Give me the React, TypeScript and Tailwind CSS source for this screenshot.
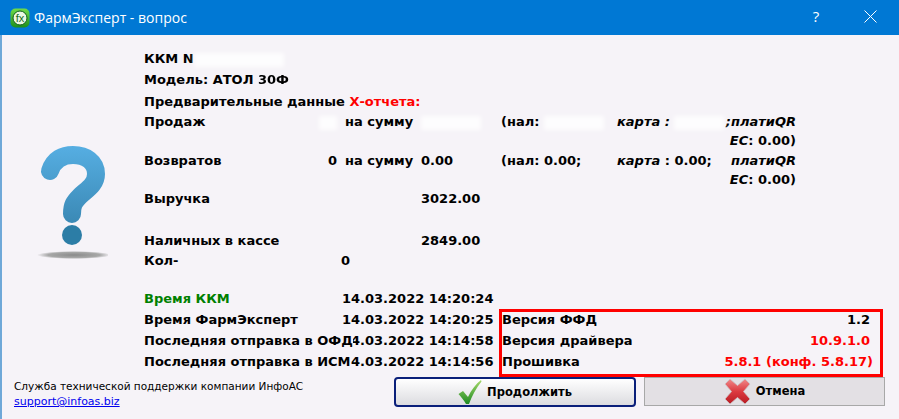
const Smudge = ({ w, cls = "" }: { w: number; cls?: string }) => (
  <span className={`inline-block h-[14px] align-middle bg-white/80 blur-[2px] ${cls}`} style={{ width: w }} />
);

function Logo() {
  return (
    <svg width="20" height="20" viewBox="0 0 20 20">
      <defs>
        <linearGradient id="lg" x1="0" y1="0" x2="0" y2="1">
          <stop offset="0" stopColor="#6fdc4a" />
          <stop offset="1" stopColor="#1c8f1a" />
        </linearGradient>
      </defs>
      <rect x="0.5" y="0.5" width="19" height="19" rx="5" fill="url(#lg)" />
      <circle cx="10" cy="10" r="7" fill="#eaf7e2" stroke="#0f5f18" strokeWidth="1" />
      <text x="10" y="14" textAnchor="middle" fontSize="11" fontFamily="Liberation Sans" fill="#1a6b20">fx</text>
    </svg>
  );
}

function Question() {
  return (
    <svg width="90" height="125" viewBox="0 0 90 125">
      <defs>
        <linearGradient id="qs" gradientUnits="userSpaceOnUse" x1="0" y1="3" x2="0" y2="82">
          <stop offset="0" stopColor="#56aee2" />
          <stop offset="1" stopColor="#3a88b4" />
        </linearGradient>
        <radialGradient id="sh">
          <stop offset="0" stopColor="#8a8a8a" />
          <stop offset="0.7" stopColor="#a8a8a8" />
          <stop offset="1" stopColor="#f6f3f8" />
        </radialGradient>
      </defs>
      <path
        d="M32 28 C 36 16, 45 12, 55 12 C 68 12, 78 19, 78 31 C 78 42, 68 47, 62 53 C 56 59, 54 62, 54 71"
        fill="none"
        stroke="url(#qs)"
        strokeWidth="18"
        strokeLinecap="round"
      />
      <circle cx="54" cy="92" r="10" fill="#2c7da6" />
      <ellipse cx="56" cy="112" rx="37" ry="4" fill="url(#sh)" />
    </svg>
  );
}

function Check() {
  return (
    <svg width="24" height="26" viewBox="0 0 24 26">
      <defs>
        <linearGradient id="c" x1="0" y1="0" x2="0" y2="1">
          <stop offset="0" stopColor="#a6d96a" />
          <stop offset="1" stopColor="#1e8a22" />
        </linearGradient>
      </defs>
      <path d="M0.5 15 L5 12 L10 18 C13 11 18 5 23 1 L23.5 2.5 C18 9 14 17 11 25 L8 25 C6 21 3 18 0.5 15 Z" fill="url(#c)" />
    </svg>
  );
}

function Cross() {
  return (
    <svg width="27" height="27" viewBox="0 0 27 27">
      <defs>
        <linearGradient id="x" x1="0" y1="0" x2="0" y2="1">
          <stop offset="0" stopColor="#f08a8a" />
          <stop offset="0.5" stopColor="#dc3a40" />
          <stop offset="1" stopColor="#b81c24" />
        </linearGradient>
      </defs>
      <path d="M6 1 L13.5 7.5 L21 1 L26 6 L19.5 13.5 L26 21 L21 26 L13.5 19.5 L6 26 L1 21 L7.5 13.5 L1 6 Z" fill="url(#x)" stroke="#c9c4c8" strokeWidth="0.8" strokeLinejoin="round" />
    </svg>
  );
}

const sumCols = "grid grid-cols-[160px_33px_84px_80px_116px_107px_72px] items-start";
const gap = "pl-2 whitespace-nowrap";

export default function App() {
  return (
    <div className="w-[899px] h-[419px] flex flex-col overflow-hidden bg-[#f6f3f8] text-black font-bold text-[13px] leading-[21px] font-['DejaVu_Sans',sans-serif]">
      <div className="h-[35px] shrink-0 bg-[#0078d4] flex items-center pl-[10px] text-white font-normal font-['Open_Sans',sans-serif]">
        <Logo />
        <span className="ml-[4px] text-[14px] flex-1">ФармЭксперт - вопрос</span>
        <span className="text-[15px] w-[14px] text-center -mt-[3px]">?</span>
        <svg width="13" height="13" viewBox="0 0 13 13" className="ml-[41px] mr-[22px] -mt-[3px]">
          <path d="M0.5 0.5 L12.5 12.5 M12.5 0.5 L0.5 12.5" stroke="#fff" strokeWidth="1" fill="none" />
        </svg>
      </div>

      <div className="flex-1 flex flex-col border-l-2 border-[#6fa8d8]">
        <div className="flex h-[342px]">
          <div className="w-[142px] shrink-0 flex flex-col pt-[108px] pl-[16px]">
            <Question />
          </div>
          <div className="flex-1 pt-[13px] flex flex-col">
            <div className="h-[21px]">ККМ N<Smudge w={90} /></div>
            <div className="h-[22px]">Модель: АТОЛ <span className="blur-[0.7px]">30Ф</span></div>
            <div className="h-[20px] whitespace-nowrap">Предварительные данные <span className="text-[#ff0000]">Х-отчета:</span></div>
            <div className={`${sumCols} h-[39px]`}>
              <div>Продаж</div>
              <div className="text-right"><Smudge w={18} /></div>
              <div className={gap}>на сумму</div>
              <div><Smudge w={60} /></div>
              <div className="whitespace-nowrap">(нал: <Smudge w={60} /></div>
              <div className="italic whitespace-nowrap">карта : <Smudge w={50} /></div>
              <div className="text-right leading-[19px] mt-px"><span className="italic">;платиQR EC</span>: 0.00)</div>
            </div>
            <div className={`${sumCols} h-[38px]`}>
              <div>Возвратов</div>
              <div className="text-right">0</div>
              <div className={gap}>на сумму</div>
              <div>0.00</div>
              <div className="whitespace-nowrap">(нал: 0.00;</div>
              <div className="whitespace-nowrap"><span className="italic">карта</span> : 0.00;</div>
              <div className="text-right leading-[19px] mt-px"><span className="italic">платиQR EC</span>: 0.00)</div>
            </div>
            <div className={`${sumCols} h-[42px]`}>
              <div>Выручка</div>
              <div />
              <div />
              <div>3022.00</div>
            </div>
            <div className={`${sumCols} h-[20px]`}>
              <div className="whitespace-nowrap">Наличных в кассе</div>
              <div />
              <div />
              <div>2849.00</div>
            </div>
            <div className={`${sumCols} h-[38px]`}>
              <div>Кол-</div>
              <div />
              <div className="pl-[4px]">0</div>
            </div>
            <div className="flex">
              <div className="w-[355px] shrink-0">
                {[
                  ["Время ККМ", "14.03.2022 14:20:24", "text-[#008000]"],
                  ["Время ФармЭксперт", "14.03.2022 14:20:25", ""],
                  ["Последняя отправка в ОФД", "14.03.2022 14:14:58", ""],
                  ["Последняя отправка в ИСМ", "14.03.2022 14:14:56", ""],
                ].map(([l, t, c]) => (
                  <div key={l} className="h-[21px] flex whitespace-nowrap">
                    <div className="w-[198px] shrink-0 relative z-10">
                      <span className={`bg-[#f6f3f8] ${c}`}>{l}</span>
                    </div>
                    <div>{t}</div>
                  </div>
                ))}
              </div>
              <div className="w-[384px] h-[68px] mt-[21px] border-[3px] border-[#ff0000]">
                <div className="-mt-[3px]">
                  <div className="h-[21px] flex justify-between pr-[10px]"><span>Версия ФФД</span><span>1.2</span></div>
                  <div className="h-[21px] flex justify-between pr-[10px]"><span>Версия драйвера</span><span className="text-[#ff0000]">10.9.1.0</span></div>
                  <div className="h-[21px] flex justify-between pr-[7px]"><span>Прошивка</span><span className="text-[#ff0000]">5.8.1 (конф. 5.8.17)</span></div>
                </div>
              </div>
            </div>
          </div>
        </div>

        <div className="flex items-start pl-[12px] pr-[14px]">
          <div className="flex-1 font-normal text-[11px] leading-[15px] pt-[2px]">
            <div className="text-[10.5px]">Служба технической поддержки компании ИнфоАС</div>
            <div className="text-[#0000ee] underline">support@infoas.biz</div>
          </div>
          <button className="w-[242px] h-[30px] border-2 border-[#0a1f7a] rounded-[4px] bg-gradient-to-b from-white to-[#dcdce0] flex items-center justify-center gap-[5px] text-[11.5px]">
            <Check />
            <span>Продолжить</span>
          </button>
          <button className="ml-[8px] w-[241px] h-[29px] border border-[#a8a8a8] bg-[#e3e0e4] flex items-center justify-center gap-[5px] text-[11.5px]">
            <Cross />
            <span>Отмена</span>
          </button>
        </div>
      </div>
    </div>
  );
}
